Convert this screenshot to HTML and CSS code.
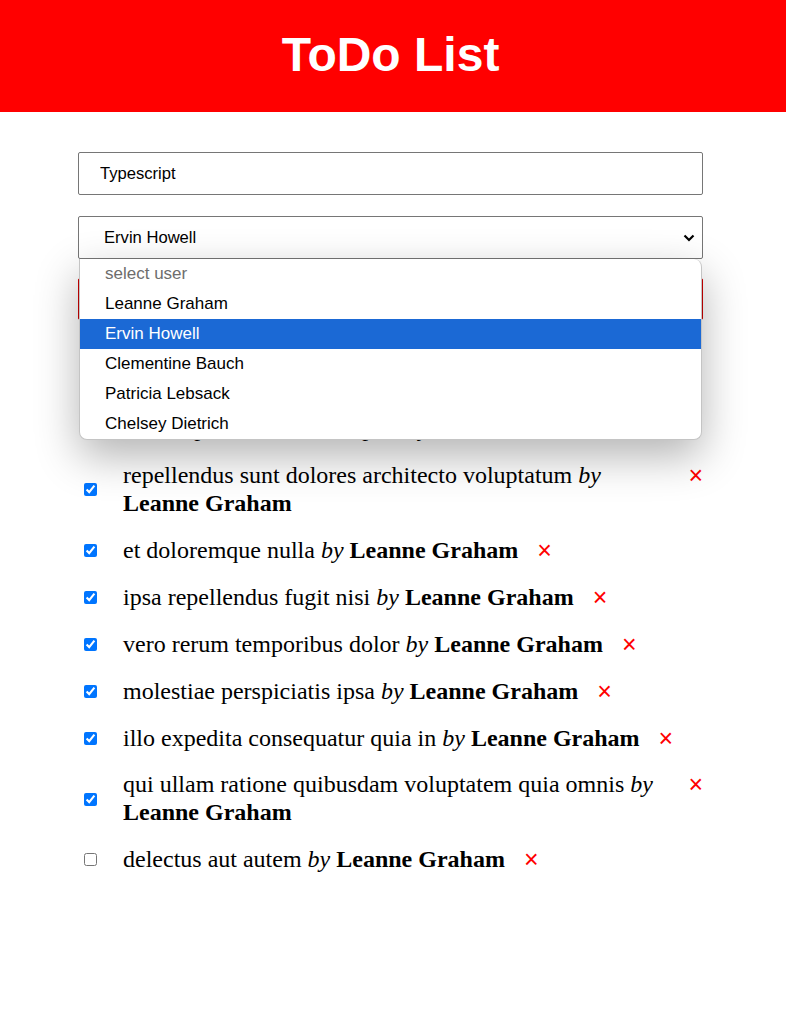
FILE: index.html
```html
<!DOCTYPE html>
<html lang="en">
<head>
<meta charset="utf-8">
<title>ToDo List</title>
<link rel="stylesheet" href="styles.css">
</head>
<body>
<header class="header">
  <h1 class="title">ToDo List</h1>
</header>
<main class="container">
  <form class="todo-form">
    <input class="field text-field" type="text" value="Typescript">
    <div class="select-wrap">
      <select class="field select-field">
        <option disabled>select user</option>
        <option>Leanne Graham</option>
        <option selected>Ervin Howell</option>
        <option>Clementine Bauch</option>
        <option>Patricia Lebsack</option>
        <option>Chelsey Dietrich</option>
      </select>
      <svg class="chevron" width="12" height="8" viewBox="0 0 12 8"><path d="M1.5 1.5 L6 6 L10.5 1.5" fill="none" stroke="#000" stroke-width="2.2"/></svg>
      <div class="dropdown">
        <div class="option option-disabled">select user</div>
        <div class="option">Leanne Graham</div>
        <div class="option option-active">Ervin Howell</div>
        <div class="option">Clementine Bauch</div>
        <div class="option">Patricia Lebsack</div>
        <div class="option">Chelsey Dietrich</div>
      </div>
    </div>
    <button class="add-btn" type="button">Add</button>
  </form>

  <ul class="todo-list">
    <li class="todo"><input class="check" type="checkbox" checked><span class="todo-text">ab voluptatum amet voluptas <i>by</i> <b>Leanne Graham</b></span><button class="remove" type="button">×</button></li>
    <li class="todo"><input class="check" type="checkbox" checked><span class="todo-text">repellendus sunt dolores architecto voluptatum <i>by</i> <b>Leanne Graham</b></span><button class="remove" type="button">×</button></li>
    <li class="todo"><input class="check" type="checkbox" checked><span class="todo-text">et doloremque nulla <i>by</i> <b>Leanne Graham</b></span><button class="remove" type="button">×</button></li>
    <li class="todo"><input class="check" type="checkbox" checked><span class="todo-text">ipsa repellendus fugit nisi <i>by</i> <b>Leanne Graham</b></span><button class="remove" type="button">×</button></li>
    <li class="todo"><input class="check" type="checkbox" checked><span class="todo-text">vero rerum temporibus dolor <i>by</i> <b>Leanne Graham</b></span><button class="remove" type="button">×</button></li>
    <li class="todo"><input class="check" type="checkbox" checked><span class="todo-text">molestiae perspiciatis ipsa <i>by</i> <b>Leanne Graham</b></span><button class="remove" type="button">×</button></li>
    <li class="todo"><input class="check" type="checkbox" checked><span class="todo-text">illo expedita consequatur quia in <i>by</i> <b>Leanne Graham</b></span><button class="remove" type="button">×</button></li>
    <li class="todo"><input class="check" type="checkbox" checked><span class="todo-text">qui ullam ratione quibusdam voluptatem quia omnis <i>by</i> <b>Leanne Graham</b></span><button class="remove" type="button">×</button></li>
    <li class="todo"><input class="check" type="checkbox"><span class="todo-text">delectus aut autem <i>by</i> <b>Leanne Graham</b></span><button class="remove" type="button">×</button></li>
  </ul>
</main>
</body>
</html>
```
FILE: styles.css
```css
* { box-sizing: border-box; }

html, body {
  margin: 0;
  padding: 0;
  background: #fff;
}

body {
  font-family: "Liberation Serif", "Times New Roman", serif;
}

.header {
  background: #ff0000;
  height: 112px;
  padding: 27px 5px 0 0;
  text-align: center;
}

.title {
  margin: 0;
  color: #fff;
  font-family: "Liberation Sans", Arial, sans-serif;
  font-weight: bold;
  font-size: 48px;
  line-height: 55px;
}

.container {
  width: 625px;
  margin: 0 0 0 78px;
  padding-top: 40px;
}

.todo-form {
  display: flex;
  flex-direction: column;
}

.field {
  display: block;
  width: 100%;
  height: 43px;
  border: 1px solid #767676;
  border-radius: 2px;
  background: #fff;
  color: #000;
  font-family: "Liberation Sans", Arial, sans-serif;
  font-size: 16.6px;
  outline: none;
}

.text-field {
  padding: 0 21px;
}

.select-wrap {
  position: relative;
  margin-top: 21px;
}

.select-field {
  -webkit-appearance: none;
  appearance: none;
  padding: 0 25px;
}

.chevron {
  position: absolute;
  right: 8px;
  top: 18px;
}

.dropdown {
  position: absolute;
  left: 1px;
  right: 1px;
  top: 43px;
  z-index: 10;
  background: #fff;
  border: 1px solid #c4c4c4;
  border-top: none;
  border-radius: 0 8px 8px 8px;
  box-shadow: 0 16px 44px rgba(0, 0, 0, 0.3);
  overflow: hidden;
}

.option {
  height: 30px;
  line-height: 30px;
  padding-left: 25px;
  font-family: "Liberation Sans", Arial, sans-serif;
  font-size: 17px;
  color: #000;
}

.option-disabled {
  color: #6d6d6d;
}

.option-active {
  background: #1b69d5;
  color: #fff;
}

.add-btn {
  margin-top: 19px;
  height: 42px;
  width: 100%;
  border: 1px solid #c00;
  border-radius: 2px;
  background: #ff0000;
  color: #fff;
  font-family: "Liberation Sans", Arial, sans-serif;
  font-size: 16px;
}

.todo-list {
  list-style: none;
  margin: 95px 0 0;
  padding: 0;
  display: flex;
  flex-direction: column;
  gap: 19.4px;
}

.todo {
  display: flex;
  align-items: center;
  font-size: 24px;
  line-height: 27.6px;
}

.check {
  flex: none;
  width: 13px;
  height: 13px;
  margin: 0 26px 0 6px;
}

.todo-text {
  flex: 0 1 auto;
}

.remove {
  flex: none;
  align-self: flex-start;
  margin-left: 19px;
  padding: 0;
  border: none;
  background: none;
  color: #ff0000;
  font-family: "Liberation Sans", Arial, sans-serif;
  font-size: 25px;
  line-height: 27.6px;
}
```
